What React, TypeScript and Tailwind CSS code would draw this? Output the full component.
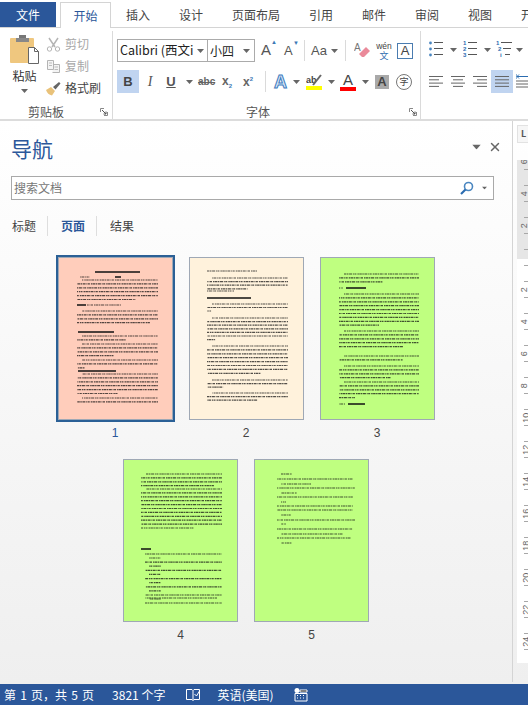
import { X } from "lucide-react";

const font = "font-['Noto_Sans_CJK_SC','Liberation_Sans',sans-serif]";
const latin = "font-['Liberation_Sans',sans-serif]";

const tabs = ["插入", "设计", "页面布局", "引用", "邮件", "审阅", "视图", "开发"];
const rulerNums = ["6", "4", "2", "", "2", "4", "6", "8", "10", "12", "14", "16", "18", "20", "22", "24"];

// greeked page text: [x, y, width, solid?]
type Line = [number, number, number, string?];

function block(startY: number, count: number, x: number, w: number, last = 0.6, step = 3.9): Line[] {
  const out: Line[] = [];
  for (let i = 0; i < count; i++) {
    const first = i === 0;
    out.push([first ? x + 5 : x, startY + i * step, i === count - 1 ? w * last : first ? w - 5 : w]);
  }
  return out;
}

const page1: Line[] = [
  [36, 14, 45, "1"],
  [21, 19, 10],
  [56, 19, 6, "1"],
  ...block(22, 6, 18, 81, 0.72),
  [18, 47, 9, "1"],
  [28, 47, 34],
  ...block(53, 4, 18, 81, 0.9),
  [19, 74, 36, "1"],
  ...block(78, 2, 18, 81, 0.6),
  ...block(86, 4, 18, 81, 0.45),
  ...block(102, 3, 18, 81, 0.1),
  [19, 113, 38, "1"],
  ...block(116, 6, 18, 81, 0.5),
  ...block(140, 2, 18, 81, 1),
];
const page2: Line[] = [
  [17, 13, 50],
  ...block(20, 4, 17, 81, 0.5, 3.6),
  [17, 33, 27],
  [17, 40, 44, "1"],
  ...block(46, 3, 17, 81, 0.05, 3.5),
  ...block(60, 7, 17, 81, 0.1, 3.6),
  ...block(88, 8, 17, 81, 0.66, 3.9),
  ...block(122, 3, 17, 81, 0.2, 3.6),
  ...block(135, 3, 17, 81, 0.62, 3.6),
];
const page3: Line[] = [
  ...block(16, 3, 18, 80, 0.55),
  [18, 30, 4],
  [25, 30, 20, "1"],
  ...block(36, 9, 18, 80, 0.5),
  ...block(73, 5, 18, 80, 0.8),
  ...block(98, 2, 18, 80, 0.8),
  ...block(108, 4, 18, 80, 0.65),
  ...block(124, 5, 18, 80, 0.2),
  [18, 146, 6],
  [27, 146, 17, "1"],
];
const page4: Line[] = [
  ...block(14, 4, 17, 81, 0.9),
  ...block(29, 11, 17, 81, 0.65),
  [17, 89, 10, "1"],
  ...[0, 2, 3, 5, 6, 7].flatMap((n, i) => [[21, 94 + i * 8.2, 77] as Line, [25, 98 + i * 8.2, 12] as Line]),
  [21, 138, 72],
  [21, 143, 77],
];
const page5: Line[] = [
  [26, 14, 11],
  [22, 19, 76],
  [26, 24, 30],
  [22, 28, 78],
  [26, 33, 16],
  [22, 37, 76],
  [26, 42, 5],
  [22, 46, 76],
  [22, 50, 76],
  [26, 55, 10],
  [22, 60, 78],
  [26, 64, 5],
  [22, 69, 76],
  [26, 74, 62],
  [22, 78, 74],
  [26, 83, 11],
];

function Thumb({ lines, bg, n, selected }: { lines: Line[]; bg: string; n: number; selected?: boolean }) {
  return (
    <div className="flex w-[115px] flex-col items-center">
      <div className={`h-[163px] w-[115px] border border-[#9fa8b5] ${bg} ${selected ? "ring-2 ring-[#2b6096]" : ""}`}>
        <svg width="113" height="161" className="block">
          {lines.map(([x, y, w, solid], i) => (
            <line
              key={i}
              x1={x}
              y1={y}
              x2={x + w}
              y2={y}
              stroke="#111"
              strokeWidth={solid ? 1.5 : 1.2}
              strokeDasharray={solid ? undefined : "2.5 .5 1.5 .6 3 .8 1 .5 2 1 1.500 .4"}
              strokeDashoffset={i * 3.7}
              opacity={solid ? 1 : 0.72}
            />
          ))}
        </svg>
      </div>
      <div className={`mt-[5px] text-[12px] leading-[17px] ${selected ? "text-[#2b579a]" : "text-[#444]"} ${latin}`}>{n}</div>
    </div>
  );
}

function Caret({ className = "" }: { className?: string }) {
  return (
    <svg width="7" height="4" viewBox="0 0 7 4" className={`shrink-0 ${className}`}>
      <path d="M0 0h7L3.5 4z" fill="#666" />
    </svg>
  );
}

function Launcher() {
  return (
    <svg width="8" height="8" viewBox="0 0 8 8" className="shrink-0">
      <path d="M.5 4V.5H4M7.5 4v3.5H4" fill="none" stroke="#888" />
      <path d="M2 2l4 4M6 3.5V6H3.5" fill="none" stroke="#555" />
    </svg>
  );
}

function ParaLines({ kind }: { kind: "left" | "center" | "right" | "just" }) {
  const rows =
    kind === "left"
      ? [[0, 14], [0, 10], [0, 14], [0, 10]]
      : kind === "center"
        ? [[0, 14], [2, 12], [0, 14], [2, 12]]
        : kind === "right"
          ? [[0, 14], [4, 14], [0, 14], [4, 14]]
          : [[0, 14], [0, 14], [0, 14], [0, 14]];
  return (
    <svg width="14" height="11" viewBox="0 0 14 11" className="block shrink-0">
      {rows.map(([x, x2], i) => (
        <rect key={i} x={x} y={i * 3.3} width={x2 - x} height="1" fill="#666" />
      ))}
    </svg>
  );
}

function ListIcon({ numbered, multi }: { numbered?: boolean; multi?: boolean }) {
  return (
    <svg width={multi ? 16 : 14} height="17" viewBox={`0 0 ${multi ? 16 : 14} 17`} className="block shrink-0">
      {[1, 7, 13].map((y, i) => (
        <g key={y}>
          {numbered ? (
            <text x={multi ? i * 2 : 0} y={y + 3} fontSize="6" fill="#2b6cb0" fontFamily="Liberation Sans" fontWeight="bold">
              {multi && i === 2 ? "i" : i + 1}
            </text>
          ) : (
            <circle cx="1.5" cy={y + 1} r="1.4" fill="#4a86c0" />
          )}
          <rect x={multi ? 5 + i * 2 : 5} y={y} width={multi ? 11 - i * 3 : 9} height="1" fill="#555" />
        </g>
      ))}
    </svg>
  );
}

export default function App() {
  return (
    <div className={`${font} flex h-[705px] w-[528px] flex-col overflow-hidden bg-white text-[#444]`}>
      {/* tab strip */}
      <div className="flex h-[28px] shrink-0 items-end border-b border-[#d4d4d4]">
        <div className="flex h-[25px] w-[56px] shrink-0 items-center justify-center bg-[#2b579a] text-[12px] text-white">文件</div>
        <div className="relative top-px ml-[4px] flex h-[26px] w-[51px] shrink-0 items-center justify-center border border-b-0 border-[#d4d4d4] bg-white text-[12px] text-[#2b579a]">
          开始
        </div>
        <div className="ml-[15px] flex h-[25px] shrink-0 items-center gap-[29px] text-[12px] whitespace-nowrap text-[#444]">
          {tabs.map((t) => (
            <span key={t} className="shrink-0">
              {t}
            </span>
          ))}
        </div>
      </div>

      {/* ribbon */}
      <div className="flex h-[93px] shrink-0 border-b-2 border-[#dcdcdc] pt-[3px]">
        {/* clipboard */}
        <div className="flex w-[113px] shrink-0 flex-col border-r border-[#dadada]">
          <div className="flex h-[74px]">
            <div className="ml-[10px] flex w-[29px] flex-col items-center pt-[4px]">
              <svg width="29" height="29" viewBox="0 0 29 29" className="block">
                <rect x="0" y="3" width="24" height="25" rx="1" fill="#efc77f" />
                <rect x="9" y="0" width="7" height="4" fill="#777" />
                <rect x="6" y="3" width="13" height="4" fill="#888" />
                <path d="M18.500 12.500h6l4 4v12h-10z" fill="#fff" stroke="#666" />
                <path d="M24.500 12.500v4h4" fill="none" stroke="#666" />
              </svg>
              <div className="mt-[4px] text-[12px] leading-[16px] whitespace-nowrap text-[#333]">粘贴</div>
              <Caret className="mt-[5px]" />
            </div>
            <div className="ml-[7px] flex flex-col gap-[6px] pt-[5px] text-[12px] leading-[16px]">
              <div className="flex items-center gap-[4px] text-[#a8a8a8]">
                <svg width="15" height="15" viewBox="0 0 15 15">
                  <path d="M3 1l6 9M12 1L6 10" stroke="#b4b4b4" strokeWidth="1.5" fill="none" />
                  <circle cx="3.500" cy="12" r="2.200" fill="none" stroke="#b4b4b4" />
                  <circle cx="11.500" cy="12" r="2.200" fill="none" stroke="#b4b4b4" />
                </svg>
                剪切
              </div>
              <div className="flex items-center gap-[4px] text-[#a8a8a8]">
                <svg width="15" height="15" viewBox="0 0 15 15">
                  <path d="M1.500 1.500h6v9h-6zM7 5.500h6.500v8h-7" fill="#f4f4f4" stroke="#b4b4b4" />
                  <path d="M3 4h3M3 6.500h3M8.500 8h3.500M8.500 10.500h3.500" stroke="#bbb" />
                </svg>
                复制
              </div>
              <div className="flex items-center gap-[4px] text-[#444]">
                <svg width="15" height="15" viewBox="0 0 15 15">
                  <path d="M0 9l5-3 4 4-3 4.500C3 14 1 12 0 9z" fill="#e9c27a" />
                  <path d="M7 6l6-5 1.500 1.500-5 6z" fill="#666" />
                </svg>
                格式刷
              </div>
            </div>
          </div>
          <div className="flex h-[14px] items-center pr-[4px] pl-[28px]">
            <span className="text-[12px] leading-[14px] text-[#555]">剪贴板</span>
            <span className="ml-auto">
              <Launcher />
            </span>
          </div>
        </div>

        {/* font */}
        <div className="flex w-[308px] shrink-0 flex-col border-r border-[#dadada] pl-[4px]">
          <div className="flex h-[74px] flex-col">
            <div className="mt-[8px] flex h-[23px] items-center">
              <div className="flex h-[23px] w-[91px] shrink-0 items-center justify-between border border-[#ababab] pr-[3px] pl-[2px] text-[12.500px] whitespace-nowrap text-[#222]">
                <span className="w-[76px] overflow-hidden">Calibri (西文i</span>
                <Caret />
              </div>
              <div className="-ml-px flex h-[23px] w-[48px] shrink-0 items-center justify-between border border-[#ababab] pr-[4px] pl-[2px] text-[12px] text-[#222]">
                小四
                <Caret />
              </div>
              <span className={`relative ml-[6px] w-[11px] shrink-0 ${latin} text-[15px] text-[#555]`}>
                A<span className="absolute -top-[1px] -right-[5px] text-[6px] text-[#3b78b5]">▲</span>
              </span>
              <span className={`relative ml-[12px] w-[8px] shrink-0 ${latin} text-[13px] text-[#555]`}>
                A<span className="absolute -top-[2px] -right-[7px] text-[6px] text-[#3b78b5]">▼</span>
              </span>
              <div className="ml-[12px] h-[21px] w-px shrink-0 bg-[#dadada]" />
              <span className={`ml-[6px] w-[16px] shrink-0 ${latin} text-[13px] text-[#555]`}>Aa</span>
              <Caret className="ml-[4px]" />
              <div className="ml-[7px] h-[21px] w-px shrink-0 bg-[#dadada]" />
              <svg width="16" height="18" viewBox="0 0 16 18" className="ml-[8px] shrink-0">
                <path d="M5 12l7-7 4 4-6 6H8z" fill="#ea8a9a" />
                <text x="0" y="9" fontSize="10" fill="#777" fontFamily="Liberation Sans">
                  A
                </text>
              </svg>
              <div className="ml-[6px] flex w-[16px] shrink-0 flex-col items-center text-[#444]">
                <span className={`${latin} text-[8.500px] leading-[10px] whitespace-nowrap`}>wén</span>
                <span className="text-[9px] leading-[10px] text-[#2f6db0]">文</span>
              </div>
              <div className={`ml-[5px] flex h-[16px] w-[16px] shrink-0 items-center justify-center border border-[#4a7cb0] ${latin} text-[13px] text-[#444]`}>
                A
              </div>
            </div>
            <div className="mt-[8px] flex h-[23px] items-center">
              <div className={`flex h-[23px] w-[22px] shrink-0 items-center justify-center bg-[#c0d4f0] ${latin} text-[13px] font-bold text-[#444]`}>B</div>
              <div className="flex w-[22px] shrink-0 justify-center font-['Liberation_Serif',serif] text-[14px] text-[#555] italic">I</div>
              <div className={`flex w-[20px] shrink-0 justify-center ${latin} text-[13px] font-bold text-[#555] underline`}>U</div>
              <Caret className="ml-[5px]" />
              <div className={`ml-[5px] w-[17px] shrink-0 ${latin} text-[10px] font-bold text-[#666] line-through`}>abc</div>
              <div className={`ml-[7px] w-[13px] shrink-0 ${latin} text-[12px] font-bold text-[#666]`}>
                x<span className="align-sub text-[6px] text-[#3b78b5]">2</span>
              </div>
              <div className={`ml-[8px] w-[13px] shrink-0 ${latin} text-[12px] font-bold text-[#666]`}>
                x<span className="align-super text-[6px] text-[#3b78b5]">2</span>
              </div>
              <div className="ml-[9px] h-[21px] w-px shrink-0 bg-[#dadada]" />
              <span className={`ml-[8px] w-[14px] shrink-0 ${latin} text-[18px] leading-[20px] font-bold text-[#dbe8f6] [-webkit-text-stroke:1px_#3d7cc0]`}>
                A
              </span>
              <Caret className="ml-[5px]" />
              <div className="ml-[6px] flex w-[16px] shrink-0 flex-col items-center">
                <svg width="16" height="13" viewBox="0 0 16 13" className="block">
                  <text x="0" y="10" fontSize="9" fontWeight="bold" fill="#444" fontFamily="Liberation Sans">
                    ab
                  </text>
                  <path d="M7 12L15 2" stroke="#666" strokeWidth="2" />
                </svg>
                <span className="h-[4px] w-[16px] bg-[#ffff00]" />
              </div>
              <Caret className="ml-[6px]" />
              <div className="ml-[5px] flex w-[16px] shrink-0 flex-col items-center">
                <span className={`${latin} text-[15px] leading-[15px] text-[#444]`}>A</span>
                <span className="h-[4px] w-[16px] bg-[#ff0000]" />
              </div>
              <Caret className="ml-[6px]" />
              <div className={`ml-[6px] flex h-[14px] w-[14px] shrink-0 items-center justify-center bg-[#a9a9a9] ${latin} text-[13px] font-bold text-[#444]`}>
                A
              </div>
              <div className="ml-[7px] flex h-[16px] w-[16px] shrink-0 items-center justify-center rounded-full border border-[#777] text-[9px] text-[#444]">
                字
              </div>
            </div>
          </div>
          <div className="flex h-[14px] items-center pr-[3px]">
            <span className="ml-[129px] text-[12px] leading-[14px] text-[#555]">字体</span>
            <span className="ml-auto">
              <Launcher />
            </span>
          </div>
        </div>

        {/* paragraph */}
        <div className="flex flex-col pl-[8px]">
          <div className="mt-[10px] flex h-[17px] items-center">
            <ListIcon />
            <Caret className="ml-[7px]" />
            <span className="ml-[6px]">
              <ListIcon numbered />
            </span>
            <Caret className="ml-[7px]" />
            <span className="ml-[5px]">
              <ListIcon numbered multi />
            </span>
            <Caret className="ml-[4px]" />
          </div>
          <div className="mt-[12px] flex h-[23px] items-center">
            <ParaLines kind="left" />
            <span className="ml-[8px]">
              <ParaLines kind="center" />
            </span>
            <span className="ml-[8px]">
              <ParaLines kind="right" />
            </span>
            <div className="ml-[4px] flex h-[23px] w-[22px] shrink-0 items-center justify-center bg-[#c0d4f0]">
              <ParaLines kind="just" />
            </div>
            <svg width="14" height="16" viewBox="0 0 14 16" className="ml-[3px] block shrink-0">
              <path d="M0 0v5M1 2.500h12M1 2.500l2-2M1 2.500l2 2" fill="none" stroke="#2b6cb0" />
              <path d="M0 7h14M0 10h14M0 13h14" stroke="#666" />
            </svg>
          </div>
        </div>
      </div>

      {/* body */}
      <div className="flex min-h-0 flex-1 bg-gradient-to-b from-white to-[#efefef]">
        <div className="mb-[2px] flex w-[513px] shrink-0 flex-col border-r border-[#d4d4d4]">
          <div className="flex h-[44px] items-center pt-[10px] pl-[11px]">
            <span className="text-[21px] leading-[28px] text-[#2b579a]">导航</span>
            <Caret className="mt-[-3px] ml-[420px] scale-125" />
            <X size={14} strokeWidth={2.5} className="mt-[-3px] ml-[8px] text-[#666]" />
          </div>
          <div className="mt-[11px] ml-[11px] flex h-[24px] w-[483px] items-center border border-[#a9a9a9] bg-white pr-[5px] pl-[2px] text-[12px] text-[#777]">
            搜索文档
            <svg width="14" height="14" viewBox="0 0 14 14" className="ml-auto">
              <circle cx="8.500" cy="5.500" r="4" fill="none" stroke="#4a86c0" strokeWidth="1.600" />
              <path d="M5.500 8.500L1 13" stroke="#2b6cb0" strokeWidth="2.200" />
            </svg>
            <Caret className="ml-[7px] scale-75" />
          </div>
          <div className="mt-[16px] flex h-[20px] items-center pl-[12px] text-[12px] text-[#444]">
            <span>标题</span>
            <span className="mx-[11px] h-[20px] w-px bg-[#dedede]" />
            <span className="ml-[2px] font-bold text-[#2b579a]">页面</span>
            <span className="mx-[11px] h-[20px] w-px bg-[#dedede]" />
            <span className="ml-[2px]">结果</span>
          </div>
          <div className="mt-[21px] ml-[57px] flex w-[378px] flex-wrap justify-center gap-x-[16px] gap-y-[17px]">
            <Thumb lines={page1} bg="bg-[#ffcdbb]" n={1} selected />
            <Thumb lines={page2} bg="bg-[#fff2dc]" n={2} />
            <Thumb lines={page3} bg="bg-[#bfff80]" n={3} />
            <Thumb lines={page4} bg="bg-[#bfff80]" n={4} />
            <Thumb lines={page5} bg="bg-[#bfff80]" n={5} />
          </div>
        </div>
        {/* vertical ruler */}
        <div className="flex flex-1 flex-col pl-[4px]">
          <div className="mt-[4px] h-[18px] w-full border border-[#e2e2e2] bg-[#f6f6f6] pl-[3px] text-[9px] leading-[16px] font-bold text-[#555]">
            L
          </div>
          <div className="mt-[17px] h-[503px] overflow-hidden bg-[linear-gradient(#e6e6e6_99px,#fff_99px)]">
            <div className={`-mt-[6px] flex flex-col ${latin} text-[9px] text-[#666]`}>
              {rulerNums.map((n, i) => (
                <div key={i}>
                  <div className="flex h-[16px] flex-col justify-end">
                    <div className="flex h-[14px] items-center pl-[5px] whitespace-nowrap">
                      <span className="-rotate-90">{n}</span>
                    </div>
                    <div className="ml-[7px] h-px w-[4px] bg-[#a8a8a8]" />
                  </div>
                  <div className="flex h-[16px] flex-col justify-end">
                    <div className="ml-[7px] h-px w-[4px] bg-[#a8a8a8]" />
                  </div>
                </div>
              ))}
            </div>
          </div>
        </div>
      </div>

      {/* status bar */}
      <div className="flex h-[21px] shrink-0 items-center bg-[#2b579a] pl-[4px] text-[12px] whitespace-nowrap text-white">
        <span className="[word-spacing:1.500px]">第 1 页，共 5 页</span>
        <span className="ml-[18px]">3821 个字</span>
        <svg width="14" height="14" viewBox="0 0 14 14" className="ml-[21px] shrink-0">
          <path d="M.5 1.500h5.500L7 2.500l1-1h5.500v10H8L7 12.500l-1-1H.500zM7 2.500v10" fill="none" stroke="#fff" />
          <path d="M8.500 6l2 2 3-5" fill="none" stroke="#fff" />
        </svg>
        <span className="ml-[17px]">英语(美国)</span>
        <svg width="14" height="14" viewBox="0 0 14 14" className="ml-[20px] shrink-0">
          <circle cx="3" cy="2.500" r="2.500" fill="#fff" />
          <path d="M1 5.500h12V13H1z" fill="none" stroke="#fff" />
          <path d="M6 2h7v2H6zM3 7.500h1M6 7.500h1M9 7.500h1M3 10h1M6 10h1M9 10h1" stroke="#fff" />
        </svg>
      </div>
    </div>
  );
}
